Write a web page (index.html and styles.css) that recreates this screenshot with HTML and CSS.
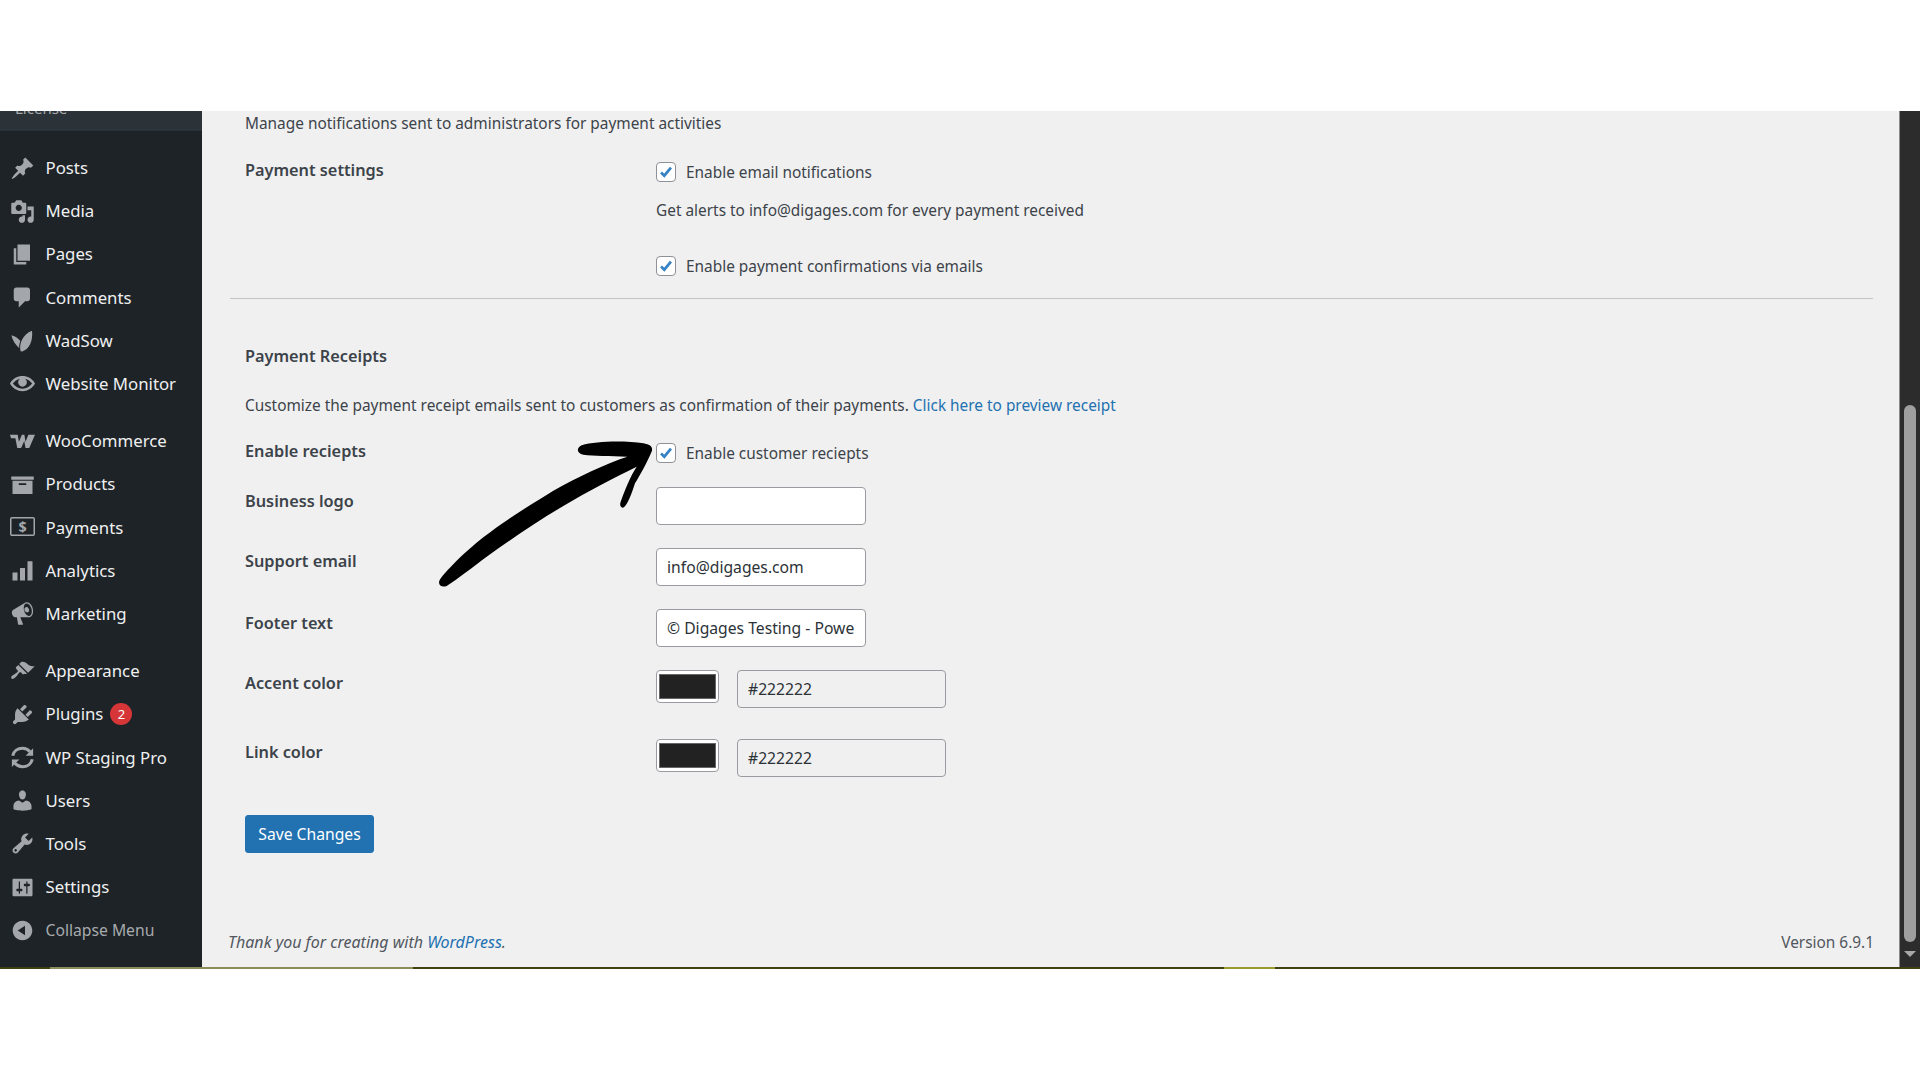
FILE: index.html
```html
<!DOCTYPE html>
<html lang="en">
<head>
<meta charset="utf-8">
<title>Payment settings</title>
<link rel="stylesheet" href="styles.css">
</head>
<body>
<div class="frame">
  <aside class="sidebar">
    <div class="submenu"><span>License</span></div>
    <ul class="menu">
      <li class="item"><svg class="ico" viewBox="0 0 20 20"><path d="M10.44 3.02l1.82-1.82 6.36 6.35-1.83 1.82c-1.05-.68-2.48-.57-3.41.36l-.75.75c-.92.93-1.04 2.35-.35 3.41l-1.83 1.82-2.41-2.41-2.8 2.79c-.42.42-3.38 2.71-3.8 2.29s1.86-3.39 2.28-3.81l2.79-2.79L4.1 9.36l1.83-1.82c1.05.69 2.48.57 3.4-.36l.75-.75c.93-.92 1.05-2.35.36-3.41z"/></svg>Posts</li>
      <li class="item"><svg class="ico" viewBox="0 0 20 20"><path d="M13 11V4c0-.55-.45-1-1-1h-1.67L9 1H5L3.67 3H2c-.55 0-1 .45-1 1v7c0 .55.45 1 1 1h10c.55 0 1-.45 1-1zM7 4.5c1.38 0 2.5 1.12 2.5 2.5S8.38 9.5 7 9.5 4.5 8.38 4.5 7 5.62 4.5 7 4.5zM14 6h5v10.5c0 1.38-1.12 2.5-2.5 2.5S14 17.88 14 16.5s1.12-2.5 2.5-2.5c.17 0 .34.02.5.05V9h-3V6zm-4 8.05V13h2v3.5c0 1.38-1.12 2.5-2.5 2.5S7 17.88 7 16.5 8.12 14 9.5 14c.17 0 .34.02.5.05z"/></svg>Media</li>
      <li class="item"><svg class="ico" viewBox="0 0 20 20"><path d="M6 15V2h10v13H6zm-1 1h8v2H3V5h2v11z"/></svg>Pages</li>
      <li class="item"><svg class="ico" viewBox="0 0 20 20"><path d="M5 2h9c1.1 0 2 .9 2 2v7c0 1.1-.9 2-2 2h-2l-5 5v-5H5c-1.1 0-2-.9-2-2V4c0-1.1.9-2 2-2z"/></svg>Comments</li>
      <li class="item"><svg class="ico" viewBox="0 0 20 20"><path d="M8.5 18.5C7 13 10 5 17.600 2.200 18.600 10 15.500 17 9.800 18.700zM7.400 16.200C4.600 13.200 2.200 10.700 1.200 5.800 4.400 6.800 6.700 8.300 8.300 10.400 7.500 12.300 7.200 14.200 7.400 16.200z"/></svg>WadSow</li>
      <li class="item"><svg class="ico" viewBox="0 0 20 20"><path d="M19.700 9.400C17.700 6 14 3.900 10 3.900S2.300 6 .3 9.400L0 10l.3.6c2 3.400 5.700 5.500 9.700 5.500s7.700-2.100 9.700-5.500l.3-.6-.3-.6zM10 14.100c-3.100 0-6-1.600-7.700-4.100C3.600 8 5.700 6.600 8 6.100c-.9.6-1.500 1.700-1.500 2.900 0 1.900 1.600 3.500 3.500 3.500s3.500-1.600 3.500-3.500c0-1.200-.6-2.300-1.500-2.900 2.300.5 4.400 1.900 5.700 3.900-1.700 2.500-4.600 4.100-7.700 4.100z"/></svg>Website Monitor</li>
      <li class="item group"><svg class="ico" viewBox="0 0 20 20"><path d="M0 4.600h6.200l.9 5.600 2.400-5.600h2l.9 5.600 2.300-5.600H20l-4.600 10.600h-3l-1-5.600-2.500 5.600H5.800L4.300 7.300H.8z"/></svg>WooCommerce</li>
      <li class="item"><svg class="ico" viewBox="0 0 20 20"><path d="M19 3.500v2.600H1V3.500h18zM2 7h16v10.500H2V7zm11 3.300V9H7v1.300h6z"/></svg>Products</li>
      <li class="item"><svg class="ico ico-up" viewBox="0 0 20 20"><rect x=".6" y="3" width="18.800" height="14" rx="1" class="outline"/><text x="10" y="14.400" class="dollar">$</text></svg>Payments</li>
      <li class="item"><svg class="ico" viewBox="0 0 20 20"><path d="M2 11.500h4V18H2zM8 8h4v10H8zM14 2.500h4V18h-4z"/></svg>Analytics</li>
      <li class="item"><svg class="ico" viewBox="0 0 20 20"><path d="M18.150 5.940c.46 1.620.38 3.220-.02 4.480-.42 1.280-1.260 2.180-2.300 2.480-.16.06-.26.06-.4.06-.06.02-.12.02-.18.02-.06.02-.14.02-.22.02h-6.800l2.220 5.500c.02.14-.06.26-.14.34-.08.1-.24.16-.34.16H6.950c-.1 0-.26-.06-.34-.16-.08-.08-.16-.2-.14-.34l-1-5.500H4.250l-.02-.02c-.5.06-1.080-.18-1.540-.62s-.88-1.080-1.060-1.880c-.24-.8-.2-1.560-.02-2.200.18-.62.58-1.080 1.060-1.300l.02-.02 9-5.400c.1-.06.18-.1.24-.16.06-.04.14-.08.24-.12.16-.08.28-.12.5-.18 1.040-.3 2.240.1 3.220.98s1.840 2.240 2.260 3.860zm-2.580 5.980h-.02c.4-.1.74-.34 1.040-.7.58-.7.86-1.760.86-3.040-.02-.64-.1-1.300-.28-1.980-.34-1.360-1.020-2.500-1.780-3.240s-1.680-1.100-2.460-.88c-.82.22-1.400.96-1.700 2-.32 1.040-.28 2.360.06 3.720.38 1.360 1 2.500 1.800 3.240.78.74 1.620 1.100 2.480.88zm-2.540-7.080c.22-.04.42-.02.62.04.38.16.76.48 1.120 1s.52 1.020.52 1.600c0 .58-.2 1.020-.56 1.300-.36.3-.84.38-1.400.3-.56-.1-1-.38-1.340-.86-.34-.46-.52-1-.52-1.58 0-.58.18-1.020.54-1.320.16-.14.34-.22.52-.28z"/></svg>Marketing</li>
      <li class="item group"><svg class="ico" viewBox="0 0 20 20"><path d="M14.480 11.060L7.410 3.990l1.500-1.500c.5-.56 2.300-.47 3.510.32 1.210.8 1.430 1.280 2.910 2.100 1.180.64 2.450 1.260 4.450.85zm-.71.71L6.700 4.700 4.930 6.470c-.39.39-.39 1.020 0 1.410l1.060 1.060c.39.39.39 1.030 0 1.420-.6.6-1.430 1.110-2.210 1.690-.35.26-.7.53-1.010.84C1.430 13.230.4 14.850 1.200 15.660c.8.8 2.420-.23 3.770-1.570.31-.31.58-.66.85-1.020.57-.78 1.080-1.600 1.690-2.210.39-.39 1.020-.39 1.410 0l1.060 1.060c.39.39 1.020.39 1.410 0z"/></svg>Appearance</li>
      <li class="item"><svg class="ico" viewBox="0 0 20 20"><path d="M13.110 4.360L9.870 7.600 8 5.730l3.240-3.240c.35-.34 1.050-.2 1.560.32.52.51.66 1.210.31 1.550zm-8 1.770l.91-1.120 9.010 9.010-1.190.84c-.71.71-2.630 1.160-3.820 1.160H6.140L4.900 17.260c-.59.59-1.540.59-2.120 0-.59-.58-.59-1.530 0-2.120l1.240-1.240v-3.880c0-1.130.4-3.190 1.090-3.890zm7.260 3.970l3.240-3.240c.34-.35 1.040-.21 1.550.31.52.51.66 1.210.31 1.550l-3.240 3.250z"/></svg>Plugins<span class="badge">2</span></li>
      <li class="item"><svg class="ico sync" viewBox="0 0 20 20"><path d="M2.200 8.600C3 5 6.200 2.600 10 2.600c2.500 0 4.500 1 6 2.800M17.800 11.400C17 15 13.800 17.400 10 17.400c-2.500 0-4.500-1-6-2.800" class="arc"/><path d="M18.500 2.500v6h-6zM1.500 17.500v-6h6z"/></svg>WP Staging Pro</li>
      <li class="item"><svg class="ico" viewBox="0 0 20 20"><path d="M10 9.250c-2.270 0-2.730-3.440-2.730-3.440C7 4.020 7.820 2 9.970 2c2.160 0 2.980 2.020 2.710 3.810 0 0-.41 3.440-2.680 3.440zm0 2.570L12.720 10c2.390 0 4.520 2.330 4.520 4.530v2.490s-3.650 1.130-7.240 1.130c-3.650 0-7.240-1.130-7.240-1.130v-2.490c0-2.250 1.940-4.480 4.470-4.480z"/></svg>Users</li>
      <li class="item"><svg class="ico" viewBox="0 0 20 20"><path d="M16.680 9.770c-1.340 1.340-3.300 1.670-4.950.99l-5.410 6.520c-.99.99-2.590.99-3.580 0s-.99-2.590 0-3.570l6.520-5.420c-.68-1.650-.35-3.610.99-4.950 1.280-1.280 3.120-1.620 4.720-1.060l-2.890 2.890 2.820 2.820 2.860-2.870c.53 1.580.18 3.390-1.080 4.650zM3.810 16.210c.4.39 1.040.39 1.430 0 .4-.4.4-1.040 0-1.430-.39-.4-1.030-.4-1.430 0-.39.39-.39 1.030 0 1.430z"/></svg>Tools</li>
      <li class="item"><svg class="ico" viewBox="0 0 20 20"><path d="M18 16V4c0-.55-.45-1-1-1H3c-.55 0-1 .45-1 1v12c0 .55.45 1 1 1h14c.55 0 1-.45 1-1zM8 11h1c.55 0 1 .45 1 1s-.45 1-1 1H8v1.500c0 .28-.22.5-.5.5s-.5-.22-.5-.5V13H6c-.55 0-1-.45-1-1s.45-1 1-1h1V5.500c0-.28.22-.5.5-.5s.5.22.5.5V11zm5-2h-1c-.55 0-1-.45-1-1s.45-1 1-1h1V5.500c0-.28.22-.5.5-.5s.5.22.5.5V7h1c.55 0 1 .45 1 1s-.45 1-1 1h-1v5.500c0 .28-.22.5-.5.5s-.5-.22-.5-.5V9z"/></svg>Settings</li>
      <li class="item collapse"><svg class="ico" viewBox="0 0 20 20"><path d="M10 2.160c4.330 0 7.840 3.510 7.840 7.840s-3.510 7.840-7.840 7.840S2.160 14.330 2.160 10 5.710 2.160 10 2.160zm2 11.720V6.120L6.180 9.970z"/></svg>Collapse Menu</li>
    </ul>
  </aside>

  <main class="main">
    <p class="desc">Manage notifications sent to administrators for payment activities</p>

    <div class="row row-settings">
      <div class="label">Payment settings</div>
      <div class="field">
        <div class="check"><span class="box"><svg viewBox="0 0 20 20"><path d="M4.500 10.500l3.600 3.600 7.400-9"/></svg></span>Enable email notifications</div>
        <p class="hint">Get alerts to info@digages.com for every payment received</p>
        <div class="check check-last"><span class="box"><svg viewBox="0 0 20 20"><path d="M4.500 10.500l3.600 3.600 7.400-9"/></svg></span>Enable payment confirmations via emails</div>
      </div>
    </div>

    <hr class="rule">

    <h2 class="heading">Payment Receipts</h2>
    <p class="intro">Customize the payment receipt emails sent to customers as confirmation of their payments. <a class="link" href="#">Click here to preview receipt</a></p>

    <div class="row row-enable">
      <div class="label">Enable reciepts</div>
      <div class="check"><span class="box"><svg viewBox="0 0 20 20"><path d="M4.500 10.500l3.600 3.600 7.400-9"/></svg></span>Enable customer reciepts</div>
    </div>
    <div class="row row-input row-logo">
      <div class="label">Business logo</div>
      <div class="input"></div>
    </div>
    <div class="row row-input">
      <div class="label">Support email</div>
      <div class="input">info@digages.com</div>
    </div>
    <div class="row row-input row-footer">
      <div class="label">Footer text</div>
      <div class="input">© Digages Testing - Powe</div>
    </div>
    <div class="row row-input">
      <div class="label">Accent color</div>
      <div class="color"><span class="swatch"><span class="chip"></span></span><div class="input hex">#222222</div></div>
    </div>
    <div class="row row-input row-link">
      <div class="label">Link color</div>
      <div class="color"><span class="swatch"><span class="chip"></span></span><div class="input hex">#222222</div></div>
    </div>

    <button class="save" type="button">Save Changes</button>

    <footer class="foot">
      <em class="thanks">Thank you for creating with <a class="link" href="#">WordPress</a>.</em>
      <span class="version">Version 6.9.1</span>
    </footer>

    <svg class="arrow" viewBox="0 0 900 570"><path d="M58 482C75 455 130 400 190 352 250 305 330 255 400 212 470 172 560 130 622 110 570 108 520 108 490 104 470 100 468 84 485 76 530 62 620 62 670 70 690 73 698 80 696 92 680 130 660 165 645 190 635 220 625 250 612 262 602 266 598 256 602 245 615 210 630 170 650 140 590 170 500 215 430 258 350 305 270 360 200 410 160 440 115 475 80 498 65 503 54 495 58 482Z"/></svg>
  </main>

  <div class="scrollbar"><span class="thumb"></span><span class="down"></span></div>
</div>
<div class="strip"><span class="s1"></span><span class="s2"></span><span class="s3"></span><span class="s4"></span><span class="s5"></span></div>
</body>
</html>
```
FILE: styles.css
```css
* { box-sizing: border-box; }
html, body { margin: 0; padding: 0; height: 100%; background: #fff; overflow: hidden; }
body { font-family: "Noto Sans", "Open Sans", sans-serif; font-size: 15.4px; color: #3c434a; padding-top: 111px; }
p, ul, h2 { margin: 0; padding: 0; }

.frame { display: flex; height: 856px; background: #f0f0f0; }

/* Sidebar */
.sidebar { width: 202px; flex: none; background: #1d2327; overflow: hidden; }
.submenu { height: 20px; background: #2c3338; padding-left: 15px; display: flex; align-items: flex-end; overflow: hidden; color: #a7aaad; font-size: 15px; line-height: 20px; }
.submenu span { margin-bottom: 13px; flex: none; }
.menu { list-style: none; padding-top: 15.5px; }
.item { height: 43.2px; display: flex; align-items: center; padding-left: 45.5px; position: relative; color: #f0f0f1; font-size: 16.8px; line-height: 22px; white-space: nowrap; }
.item.group { margin-top: 14px; }
.item.collapse { color: #a7aaad; font-size: 15.7px; }
.ico { position: absolute; left: 10px; top: 9px; width: 25px; height: 25px; fill: #a3a7ab; }
.ico-up { top: 8px; }
.outline { fill: none; stroke: #a3a7ab; stroke-width: 1.2; }
.dollar { font-family: "Noto Sans", sans-serif; font-size: 11.5px; font-weight: 700; text-anchor: middle; fill: #a3a7ab; }
.arc { fill: none; stroke: #a3a7ab; stroke-width: 2.4; }
.badge { width: 22px; height: 22px; margin-left: 7px; border-radius: 50%; background: #d63638; color: #fff; font-size: 13px; line-height: 22px; text-align: center; }

/* Main */
.main { flex: 1; min-width: 0; display: flex; flex-direction: column; padding: 0 26px 0 28px; position: relative; }
.desc { padding-left: 15px; height: 24px; line-height: 26px; }
.row { display: flex; padding-left: 15px; }
.label { width: 411px; flex: none; font-size: 16.3px; font-weight: 600; line-height: 20px; }
.row-settings { margin-top: 25px; }
.check { display: flex; align-items: flex-start; height: 24px; line-height: 26px; }
.box { width: 20px; height: 20px; margin-right: 10px; border: 1.5px solid #8f9196; border-radius: 4px; background: #fff; display: flex; flex: none; align-self: center; }
.box svg { width: 100%; height: 100%; fill: none; stroke: #3582c4; stroke-width: 3; }
.hint { margin-top: 14px; line-height: 26px; height: 24px; }
.check-last { margin-top: 32px; }
.rule { margin: 20px 0 0; border: 0; height: 1px; background: #c3c4c7; flex: none; }
.heading { margin-top: 46px; padding-left: 15px; font-size: 16.3px; font-weight: 600; line-height: 22px; color: #3c434a; }
.intro { margin-top: 27px; padding-left: 15px; line-height: 24px; height: 22px; }
.link { color: #2271b1; text-decoration: none; }
.row-enable { margin-top: 25px; }
.row-input { margin-top: 23px; }
.row-input .label { padding-top: 3px; }
.row-logo { margin-top: 22px; }
.row-logo .label, .row-footer .label { padding-top: 4px; }
.row-link { margin-top: 31px; }
.input { width: 210px; height: 38px; border: 1.5px solid #9a9ba1; border-radius: 4px; background: #fff; padding: 0 10px; font-size: 15.7px; line-height: 36.5px; white-space: nowrap; overflow: hidden; color: #2c3338; }
.color { display: flex; gap: 18px; }
.swatch { width: 63px; height: 33px; border: 1.5px solid #9a9ba1; border-radius: 4px; background: #fff; padding: 3px 2px; display: flex; flex: none; }
.chip { flex: 1; background: #222; border: 1px solid #666; }
.input.hex { width: 209px; background: transparent; }
.save { margin: 38px 0 0 15px; width: 129px; height: 38px; flex: none; background: #2271b1; border: 1px solid #2271b1; border-radius: 3px; color: #fff; font-family: inherit; font-size: 15.7px; padding: 0; }
.foot { margin-top: auto; height: 37px; display: flex; justify-content: space-between; color: #50575e; line-height: 24px; }
.thanks { margin-left: -2px; font-size: 16px; }
.version { margin-right: -1px; line-height: 26px; }
.arrow { position: absolute; left: 218px; top: 309px; width: 300px; height: 190px; fill: #000; }

/* Scrollbar */
.scrollbar { width: 21px; flex: none; background: #2c2c2c; border-left: 1px solid #8a8a8a; position: relative; }
.thumb { position: absolute; left: 4px; top: 294px; width: 12px; height: 537px; border-radius: 6px; background: #9f9f9f; }
.down { position: absolute; left: 4px; bottom: 10px; border-left: 6px solid transparent; border-right: 6px solid transparent; border-top: 6px solid #a8a8a8; }

/* Bottom edge */
.strip { display: flex; height: 2px; background: #3f3f14; }
.s1 { width: 50px; }
.s2 { width: 363px; background: #8a8c5a; }
.s3 { width: 811px; }
.s4 { width: 51px; background: #9a9a30; }
.s5 { flex: 1; }
```
